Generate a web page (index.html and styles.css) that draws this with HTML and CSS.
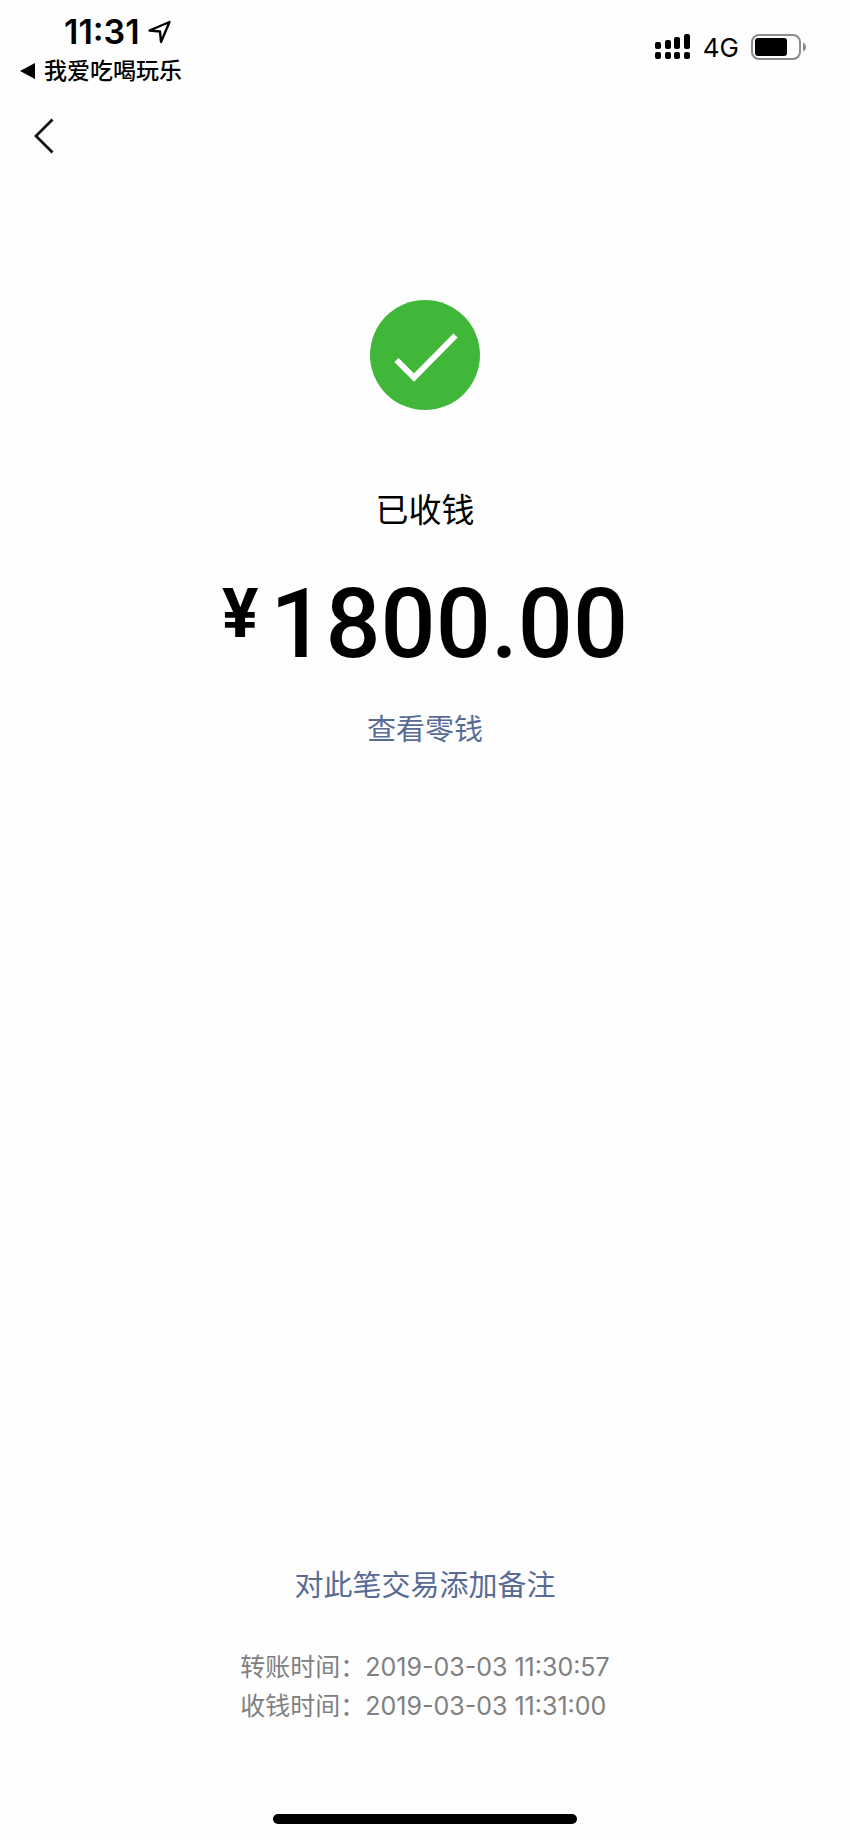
FILE: index.html
```html
<!DOCTYPE html>
<html lang="zh-CN">
<head>
    <meta charset="UTF-8">
    <meta name="viewport" content="width=device-width, initial-scale=1.0">
    <title>已收钱</title>
    <link rel="stylesheet" href="styles.css">
</head>
<body>

<div class="status-bar">
    <div class="status-left">
        <div class="clock">
            <span>11:31</span>
            <svg width="24" height="24" viewBox="0 0 24 24">
                <path d="M1.5 10.5 L21.5 2 L13 22 L12 11.5 Z" fill="none" stroke="#000" stroke-width="2.4" stroke-linejoin="round"/>
            </svg>
        </div>
        <a class="app-back" href="#">
            <svg width="16" height="16" viewBox="0 0 16 16">
                <path d="M0 8 L15 0 V16 Z"/>
            </svg>
            我爱吃喝玩乐
        </a>
    </div>
    <div class="status-right">
        <svg width="36" height="26" viewBox="0 0 36 26">
            <rect x="0" y="8" width="6" height="7" rx="2"/>
            <rect x="10" y="6" width="6" height="9" rx="2"/>
            <rect x="19" y="3" width="6" height="12" rx="2"/>
            <rect x="29" y="0" width="6" height="15" rx="2"/>
            <rect x="0" y="18" width="6" height="7" rx="2"/>
            <rect x="10" y="18" width="6" height="7" rx="2"/>
            <rect x="19" y="18" width="6" height="7" rx="2"/>
            <rect x="29" y="18" width="6" height="7" rx="2"/>
        </svg>
        <span class="network">4G</span>
        <svg width="55" height="26" viewBox="0 0 55 26">
            <rect x="1" y="1" width="48" height="24" rx="7" fill="none" stroke="#8c8c8c" stroke-width="2"/>
            <rect x="4" y="4" width="32" height="18" rx="3"/>
            <path d="M52 8.5 Q55 10 55 13 Q55 16 52 17.5 Z" fill="#8c8c8c"/>
        </svg>
    </div>
</div>

<div class="nav">
    <button class="nav-back" type="button" aria-label="返回">
        <svg width="20" height="36" viewBox="0 0 20 36">
            <path d="M18.5 1.5 L2 18 L18.5 34.5" fill="none" stroke="#111" stroke-width="2.8"/>
        </svg>
    </button>
</div>

<main class="result">
    <svg class="result-icon" width="110" height="110" viewBox="0 0 110 110">
        <circle cx="55" cy="55" r="55" fill="#41b739"/>
        <path d="M26.5 60 L44 77.5 L85.5 35.5" fill="none" stroke="#fff" stroke-width="6"/>
    </svg>
    <h1>已收钱</h1>
    <div class="amount"><span class="currency">¥</span><span>1800.00</span></div>
    <a class="link" href="#">查看零钱</a>
</main>

<footer class="footer">
    <a class="link" href="#">对此笔交易添加备注</a>
    <div class="times">
        <p>转账时间：2019-03-03 11:30:57</p>
        <p>收钱时间：2019-03-03 11:31:00</p>
    </div>
    <div class="home-bar"></div>
</footer>

</body>
</html>
```
FILE: styles.css
```css
* {
    box-sizing: border-box;
}

body {
    margin: 0;
    min-height: 100vh;
    display: flex;
    flex-direction: column;
    background-color: #fefefe;
    color: #000;
    font-family: Inter, "Noto Sans CJK SC", sans-serif;
}

svg {
    display: block;
    flex: none;
}

a {
    text-decoration: none;
}

.status-bar {
    display: flex;
    justify-content: space-between;
    padding: 12px 44px 0 20px;
}

.clock {
    display: flex;
    align-items: center;
    gap: 8px;
    padding-left: 44px;
    font-size: 34px;
    line-height: 40px;
    font-weight: 600;
}

.app-back {
    display: flex;
    align-items: center;
    gap: 8px;
    color: #000;
    font-size: 23px;
    line-height: 38px;
    font-weight: 500;
}

.status-right {
    display: flex;
    align-items: center;
    gap: 12px;
    height: 70px;
}

.network {
    font-size: 26px;
    font-weight: 400;
}

.nav {
    padding: 28px 34px;
}

.nav-back {
    display: block;
    padding: 0;
    border: none;
    background: none;
    cursor: pointer;
}

.result {
    flex: 1;
    display: flex;
    flex-direction: column;
    align-items: center;
    padding-top: 118px;
}

h1 {
    margin: 76px 0 0;
    font-size: 33px;
    line-height: 48px;
    font-weight: 400;
}

.amount {
    display: flex;
    align-items: flex-start;
    gap: 12px;
    margin-top: 30px;
    font-family: Roboto, "Noto Sans", sans-serif;
    font-size: 97px;
    line-height: 120px;
    font-weight: 500;
}

.currency {
    font-size: 68px;
    line-height: 100px;
    font-weight: 700;
}

.link {
    color: #576b95;
    font-size: 29px;
    line-height: 40px;
    font-weight: 400;
}

.result .link {
    margin-top: 26px;
}

.footer {
    display: flex;
    flex-direction: column;
    align-items: center;
    padding-bottom: 16px;
}

.times {
    margin-top: 42px;
    color: #808080;
    font-size: 25px;
    line-height: 39px;
}

.times p {
    margin: 0;
}

.home-bar {
    width: 304px;
    max-width: 80%;
    height: 10px;
    margin-top: 88px;
    border-radius: 5px;
    background-color: #000;
}
```
